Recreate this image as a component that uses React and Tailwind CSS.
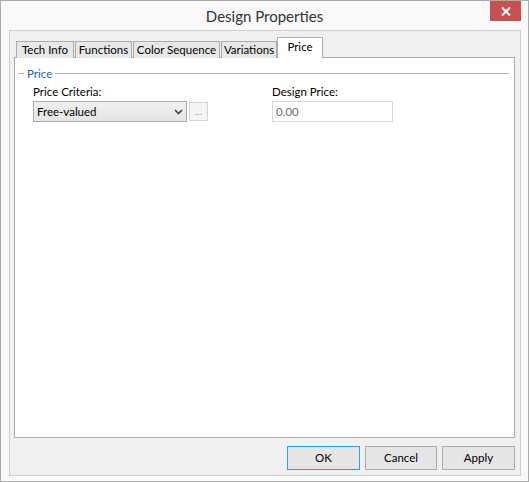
import { useState } from 'react';

const tabs = [
  { label: 'Tech Info', w: 'w-[58px]', ml: 'ml-[2px]' },
  { label: 'Functions', w: 'w-[57px]', ml: 'ml-[1px]' },
  { label: 'Color Sequence', w: 'w-[87px]', ml: 'ml-[1px]' },
  { label: 'Variations', w: 'w-[56px]', ml: 'ml-[1px]' },
  { label: 'Price', w: 'w-[46px]', ml: 'ml-0' },
];

const App = () => {
  const [active, setActive] = useState('Price');

  return (
    <div className="w-[529px] h-[482px] bg-[#f9f9f9] border border-[#acacac] flex flex-col relative font-['Segoe_UI',Lato,sans-serif] text-[11.5px] text-black">
      {/* Title bar */}
      <div className="h-[29px] flex items-center justify-center">
        <span className="text-[15px] text-[#333] pt-[1px]">Design Properties</span>
      </div>
      <button className="absolute top-0 right-[7px] w-[31px] h-[20px] bg-[#c75050] flex items-center justify-center">
        <svg width="10" height="9" viewBox="0 0 10 9">
          <path d="M1 0.5 L9 8.5 M9 0.5 L1 8.5" stroke="white" strokeWidth="2" />
        </svg>
      </button>

      {/* Client area */}
      <div className="ml-[8px] mr-[7px] mb-[5px] h-[446px] bg-[#f0f0f0] border border-[#cfcfcf] flex flex-col pt-[6px] pl-[4px] pr-[5px]">
        {/* Tabs */}
        <div className="h-[21px] flex items-end -mb-px relative z-10">
          {tabs.map((t) => {
            const sel = t.label === active;
            return (
              <button
                key={t.label}
                onClick={() => setActive(t.label)}
                className={
                  sel
                    ? `${t.w} ${t.ml} h-[21px] bg-white border border-b-0 border-[#acacac] text-center whitespace-nowrap pb-[3px] leading-none`
                    : `${t.w} ${t.ml} h-[17px] bg-[#e8e8e8] border border-b-0 border-[#acacac] text-center whitespace-nowrap leading-none`
                }
              >
                {t.label}
              </button>
            );
          })}
        </div>

        {/* Panel */}
        <div className="h-[381px] bg-white border border-[#acacac] pt-[9px] pl-[3px] pr-[5px]">
          {/* Group header */}
          <div className="flex items-center h-[13px]">
            <div className="w-[6px] h-px bg-[#b0b0b0]" />
            <span className="text-[#1d5fbf] px-[3px] leading-none">Price</span>
            <div className="flex-1 h-px bg-[#b0b0b0]" />
          </div>

          <div className="flex pl-[15px] mt-[6px]">
            <div className="w-[239px]">
              <div className="leading-none h-[15px]">Price Criteria:</div>
              <div className="flex items-center">
                <div className="w-[154px] h-[21px] border border-[#acacac] bg-gradient-to-b from-[#f0f0f0] to-[#e5e5e5] flex items-center justify-between pl-[3px] pr-[3px]">
                  <span>Free-valued</span>
                  <svg width="9" height="6" viewBox="0 0 9 6">
                    <path d="M1 1 L4.5 4.5 L8 1" stroke="#444" strokeWidth="1.6" fill="none" />
                  </svg>
                </div>
                <div className="ml-[2px] w-[19px] h-[19px] border border-[#d5d5d5] bg-[#f4f4f4] text-[#a0a0a0] flex items-center justify-center text-[10px] leading-none pb-[2px]">
                  ...
                </div>
              </div>
            </div>
            <div>
              <div className="leading-none h-[15px]">Design Price:</div>
              <div className="w-[121px] h-[21px] border border-[#d9d9d9] bg-white flex items-center pl-[3px] text-[#6d6d6d]">
                0.00
              </div>
            </div>
          </div>
        </div>

        {/* Buttons */}
        <div className="mt-[8px] flex justify-end gap-[5px]">
          <button className="w-[73px] h-[24px] border border-[#3399ff] bg-[#e5e5e5]">OK</button>
          <button className="w-[72px] h-[24px] border border-[#acacac] bg-[#e5e5e5]">Cancel</button>
          <button className="w-[73px] h-[24px] border border-[#acacac] bg-[#e5e5e5]">Apply</button>
        </div>
      </div>
    </div>
  );
};

export default App;
